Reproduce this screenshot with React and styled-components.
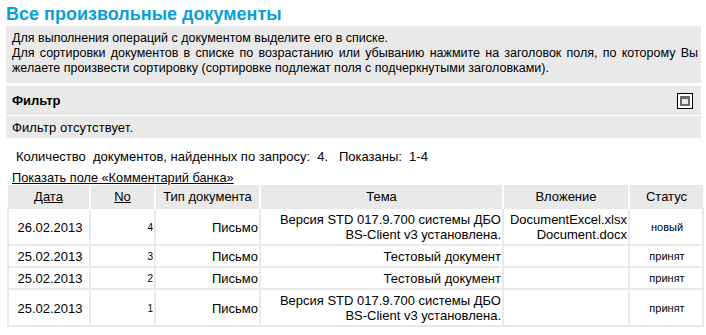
import React from "react";
import styled, { createGlobalStyle } from "styled-components";

const Global = createGlobalStyle`
  html, body { margin: 0; padding: 0; background: #fff; }
  body { font-family: "Liberation Sans", Arial, sans-serif; color: #000; }
`;

const Page = styled.div`
  padding: 0 5px 0 6px;
`;

const Title = styled.h1`
  margin: 2px 0 0;
  font-size: 18px;
  line-height: 24px;
  font-weight: bold;
  color: #0a9fd6;
`;

const InfoBox = styled.div`
  background: #e9e9e9;
  padding: 5px 3px 7px 6px;
  font-size: 12.5px;
  line-height: 15px;
  text-align: justify;
`;

const Panel = styled.div`
  margin-top: 3px;
  background: #e9e9e9;
`;

const PanelHead = styled.div`
  display: flex;
  align-items: center;
  justify-content: space-between;
  height: 29px;
  padding: 0 8px 0 6px;
  font-size: 13px;
  font-weight: bold;
  border-bottom: 1px solid #fff;
`;

const PanelBody = styled.div`
  height: 22px;
  display: flex;
  align-items: center;
  padding: 0 6px;
  font-size: 13px;
  letter-spacing: 0.1px;
`;

const MaxIcon = styled.span`
  display: inline-block;
  width: 16px;
  height: 16px;
  box-sizing: border-box;
  border: 1px solid #000;
  background: #fff;
  padding: 2px;
  &::after {
    content: "";
    display: block;
    width: 100%;
    height: 100%;
    box-sizing: border-box;
    border: 2px solid #6a6a6a;
    border-top-width: 3px;
    background: #e6e6e6;
  }
`;

const Count = styled.div`
  margin: 11px 0 0 10px;
  font-size: 13px;
  line-height: 15px;
  white-space: pre;
`;

const ToggleLink = styled.a`
  display: block;
  width: max-content;
  margin: 6px 0 0 6px;
  font-size: 12.75px;
  line-height: 15px;
  color: #000;
  text-decoration: underline;
  cursor: pointer;
`;

const Table = styled.table`
  margin: 0 0 0 1px;
  width: 695px;
  border-collapse: collapse;
  table-layout: fixed;
  font-size: 13px;
  line-height: 15px;
`;

const Th = styled.th`
  background: #e9e9e9;
  font-weight: normal;
  padding: 4px 3px 3px;
  text-align: center;
  border-left: 2px solid #fff;
  &:first-child { border-left: none; }
  a { color: #000; text-decoration: underline; }
`;

const Td = styled.td`
  padding: 3px 1px 2px 3px;
  border: 2px solid #e9e9e9;
  text-align: ${(p) => p.$align || "right"};
  vertical-align: middle;
  overflow: hidden;
  white-space: ${(p) => (p.$nowrap ? "nowrap" : "normal")};
  font-size: ${(p) => p.$size || "13px"};
`;

const rows = [
  {
    date: "26.02.2013",
    no: "4",
    type: "Письмо",
    topic: "Версия STD 017.9.700 системы ДБО BS-Client v3 установлена.",
    files: ["DocumentExcel.xlsx", "Document.docx"],
    status: "новый",
  },
  { date: "25.02.2013", no: "3", type: "Письмо", topic: "Тестовый документ", files: [], status: "принят" },
  { date: "25.02.2013", no: "2", type: "Письмо", topic: "Тестовый документ", files: [], status: "принят" },
  {
    date: "25.02.2013",
    no: "1",
    type: "Письмо",
    topic: "Версия STD 017.9.700 системы ДБО BS-Client v3 установлена.",
    files: [],
    status: "принят",
  },
];

export default function App() {
  return (
    <Page>
      <Global />
      <Title>Все произвольные документы</Title>
      <InfoBox>
        Для выполнения операций с документом выделите его в списке.
        <br />
        Для сортировки документов в списке по возрастанию или убыванию нажмите на заголовок поля, по которому Вы
        желаете произвести сортировку (сортировке подлежат поля с подчеркнутыми заголовками).
      </InfoBox>
      <Panel>
        <PanelHead>
          <span>Фильтр</span>
          <MaxIcon />
        </PanelHead>
        <PanelBody>Фильтр отсутствует.</PanelBody>
      </Panel>
      <Count>{"Количество  документов, найденных по запросу:  4.   Показаны:  1-4"}</Count>
      <ToggleLink>Показать поле «Комментарий банка»</ToggleLink>
      <Table>
        <colgroup>
          <col style={{ width: 82 }} />
          <col style={{ width: 65 }} />
          <col style={{ width: 105 }} />
          <col style={{ width: 243 }} />
          <col style={{ width: 126 }} />
          <col style={{ width: 74 }} />
        </colgroup>
        <thead>
          <tr>
            <Th><a>Дата</a></Th>
            <Th><a>No</a></Th>
            <Th>Тип документа</Th>
            <Th>Тема</Th>
            <Th>Вложение</Th>
            <Th>Статус</Th>
          </tr>
        </thead>
        <tbody>
          {rows.map((r, i) => (
            <tr key={i}>
              <Td $align="center">{r.date}</Td>
              <Td $size="10px">{r.no}</Td>
              <Td>{r.type}</Td>
              <Td>{r.topic}</Td>
              <Td $nowrap>
                {r.files.map((f, j) => (
                  <div key={j}>{f}</div>
                ))}
              </Td>
              <Td $align="center" $size="11px">{r.status}</Td>
            </tr>
          ))}
        </tbody>
      </Table>
    </Page>
  );
}
